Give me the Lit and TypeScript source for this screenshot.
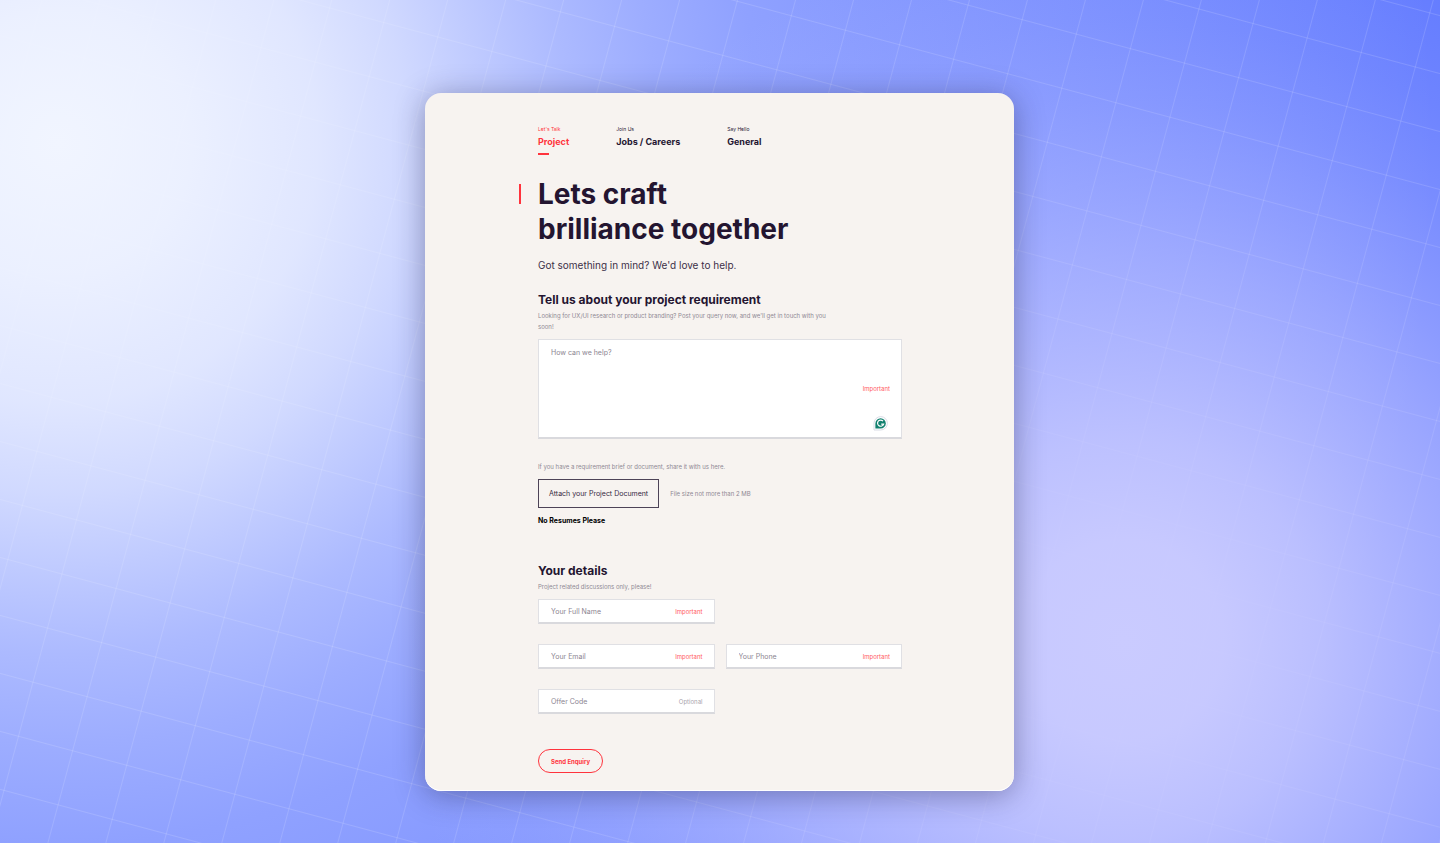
import { LitElement, html, css, svg } from "lit";
import { customElement, property, state } from "lit/decorators.js";
import { classMap } from "lit/directives/class-map.js";

interface Tab {
  id: string;
  hint: string;
  name: string;
}

const TABS: Tab[] = [
  { id: "project", hint: "Let's Talk", name: "Project" },
  { id: "careers", hint: "Join Us", name: "Jobs / Careers" },
  { id: "general", hint: "Say Hello", name: "General" },
];

const assistantIcon = svg`
  <path d="M1 14V7.2A6.7 6.7 0 1 1 7.7 14Z" fill="#fff" stroke="#d9dce6" stroke-width="1"/>
  <path d="M2.4 12.6V7.4A5.2 5.2 0 1 1 7.6 12.6Z" fill="#11806f"/>
  <path d="M10 5.1A3.1 3.1 0 1 0 10.6 8.2H8.2" fill="none" stroke="#fff" stroke-width="1.2"/>
`;

/** One-line text box with a note at its right end. */
@customElement("text-field")
export class TextField extends LitElement {
  @property() label = "";
  @property() note = "Important";
  @property() type = "text";

  static styles = css`
    :host {
      display: block;
      min-width: 0;
    }
    .box {
      box-sizing: border-box;
      display: flex;
      align-items: center;
      height: 25px;
      padding: 0 11px 0 12px;
      background: #fff;
      border: 1px solid #e0e0e4;
      border-bottom: 2px solid #d9d9dd;
    }
    .input {
      flex: 1;
      min-width: 0;
      padding: 0;
      border: 0;
      outline: 0;
      background: none;
      color: #241530;
      font: 7px/11px Inter, sans-serif;
    }
    .input::placeholder {
      color: #8b8591;
      opacity: 1;
    }
    .note {
      color: #ff5a5f;
      font-size: 6px;
      line-height: 11px;
    }
    .optional {
      color: #a9a5ad;
    }
  `;

  render() {
    return html`
      <label class="box">
        <input class="input" type=${this.type} placeholder=${this.label} aria-label=${this.label} />
        <span class=${classMap({ note: true, optional: this.note === "Optional" })}>${this.note}</span>
      </label>
    `;
  }
}

@customElement("app-root")
export class AppRoot extends LitElement {
  @state() private current = "project";

  static styles = css`
    :host {
      position: relative;
      box-sizing: border-box;
      display: flex;
      justify-content: center;
      align-items: flex-start;
      min-height: 100vh;
      padding: 93px 25px 52px 24px;
      overflow: hidden;
      background: #657dff;
      color: #241530;
      font-family: Inter, sans-serif;
      font-size: 7px;
      line-height: 11px;
    }
    .grid,
    .glow {
      position: absolute;
      inset: 0;
      width: 100%;
      height: 100%;
    }
    .glow {
      background:
        radial-gradient(
          circle at 78% 76%,
          rgba(202, 203, 255, 1) 0,
          rgba(202, 203, 255, 0.97) 100px,
          rgba(202, 203, 255, 0.84) 200px,
          rgba(202, 203, 255, 0.63) 310px,
          rgba(202, 203, 255, 0.5) 380px,
          rgba(202, 203, 255, 0.38) 440px,
          rgba(202, 203, 255, 0.2) 540px,
          rgba(202, 203, 255, 0.09) 620px,
          rgba(202, 203, 255, 0) 720px
        ),
        radial-gradient(
          circle at 4% 17%,
          rgba(241, 245, 255, 1) 0,
          rgba(241, 245, 255, 0.96) 130px,
          rgba(241, 245, 255, 0.88) 260px,
          rgba(241, 245, 255, 0.77) 350px,
          rgba(241, 245, 255, 0.64) 430px,
          rgba(241, 245, 255, 0.51) 510px,
          rgba(241, 245, 255, 0.4) 600px,
          rgba(241, 245, 255, 0.3) 700px,
          rgba(241, 245, 255, 0.24) 820px,
          rgba(241, 245, 255, 0.15) 1020px,
          rgba(241, 245, 255, 0) 1380px
        );
    }
    .card {
      position: relative;
      box-sizing: border-box;
      width: 100%;
      max-width: 589px;
      padding: 32px 112px 18px 113px;
      border-radius: 16px;
      background: #f7f3f0;
      box-shadow: 0 4px 30px rgba(30, 30, 70, 0.4), inset 0 -1px 0 #fff;
    }
    .tabs {
      display: flex;
      gap: 47px;
    }
    .tab {
      display: flex;
      flex-direction: column;
      color: inherit;
      text-decoration: none;
    }
    .hint {
      font-size: 5px;
      line-height: 9px;
    }
    .name {
      font-size: 9px;
      font-weight: 700;
      line-height: 16px;
    }
    .tab::after {
      content: "";
      width: 11px;
      height: 2px;
      margin-top: 3px;
    }
    .active {
      color: #ff333d;
    }
    .active::after {
      background: #ff333d;
    }
    .title {
      position: relative;
      margin: 22px 0 0;
      font-size: 28px;
      font-weight: 700;
      line-height: 35px;
    }
    .title::before {
      content: "";
      position: absolute;
      left: -19px;
      top: 7px;
      width: 2px;
      height: 20px;
      background: #ff333d;
    }
    .lead {
      margin: 10px 0 18px;
      color: #3d3048;
      font-size: 10px;
      line-height: 16px;
    }
    .heading {
      margin: 0 0 1px;
      font-size: 12px;
      font-weight: 700;
      line-height: 18px;
    }
    .help {
      max-width: 294px;
      margin: 0 0 7px;
      color: #8f8994;
      font-size: 6px;
    }
    .message {
      position: relative;
      box-sizing: border-box;
      display: flex;
      align-items: center;
      height: 100px;
      margin-bottom: 22px;
      padding: 0 11px 0 12px;
      background: #fff;
      border: 1px solid #e0e0e4;
      border-bottom: 2px solid #d9d9dd;
    }
    .textarea {
      flex: 1;
      align-self: stretch;
      padding: 7px 0;
      border: 0;
      outline: 0;
      resize: none;
      background: none;
      color: #241530;
      font: 7px/11px Inter, sans-serif;
    }
    .textarea::placeholder {
      color: #8b8591;
      opacity: 1;
    }
    .note {
      color: #ff5a5f;
      font-size: 6px;
    }
    .assistant {
      position: absolute;
      right: 13px;
      bottom: 6px;
      width: 15px;
      height: 15px;
    }
    .attach {
      display: flex;
      align-items: center;
      gap: 11px;
    }
    .limit {
      color: #8f8994;
      font-size: 6px;
    }
    .attach-button {
      height: 29px;
      padding: 0 10px;
      border: 1px solid #4d4357;
      background: none;
      color: #35283f;
      font: 7px/11px Inter, sans-serif;
    }
    .warning {
      margin: 7px 0 36px;
      color: #000;
      font-weight: 700;
    }
    .fields {
      display: grid;
      grid-template-columns: 1fr 1fr;
      gap: 20px 11px;
    }
    .start {
      grid-column: 1;
    }
    .send {
      height: 24px;
      margin-top: 35px;
      padding: 0 12px;
      border: 1px solid #ff333d;
      border-radius: 12px;
      background: none;
      color: #ff333d;
      font: 700 6px/11px Inter, sans-serif;
    }
  `;

  private choose(event: Event, id: string) {
    event.preventDefault();
    this.current = id;
  }

  render() {
    return html`
      <svg class="grid" aria-hidden="true">
        <defs>
          <pattern
            id="mesh"
            width="56"
            height="56"
            patternUnits="userSpaceOnUse"
            patternTransform="translate(1130 48) rotate(15)"
          >
            <path d="M0 .5H56M.5 0V56" fill="none" stroke="#fff" stroke-opacity=".14" />
          </pattern>
        </defs>
        <rect width="100%" height="100%" fill="url(#mesh)" />
      </svg>
      <div class="glow"></div>

      <main class="card">
        <nav class="tabs">
          ${TABS.map(
            (tab) => html`
              <a
                href="#${tab.id}"
                class=${classMap({ tab: true, active: tab.id === this.current })}
                @click=${(event: Event) => this.choose(event, tab.id)}
              >
                <span class="hint">${tab.hint}</span>
                <span class="name">${tab.name}</span>
              </a>
            `,
          )}
        </nav>

        <h1 class="title">Lets craft<br />brilliance together</h1>
        <p class="lead">Got something in mind? We'd love to help.</p>

        <form @submit=${(event: Event) => event.preventDefault()}>
          <h2 class="heading">Tell us about your project requirement</h2>
          <p class="help">
            Looking for UX/UI research or product branding? Post your query now, and we'll get in touch with you soon!
          </p>
          <label class="message">
            <textarea class="textarea" placeholder="How can we help?" aria-label="How can we help?"></textarea>
            <span class="note">Important</span>
            <svg class="assistant" viewBox="0 0 15 15" aria-hidden="true">${assistantIcon}</svg>
          </label>

          <p class="help">If you have a requirement brief or document, share it with us here.</p>
          <div class="attach">
            <button class="attach-button" type="button">Attach your Project Document</button>
            <span class="limit">File size not more than 2 MB</span>
          </div>
          <p class="warning">No Resumes Please</p>

          <h2 class="heading">Your details</h2>
          <p class="help">Project related discussions only, please!</p>
          <div class="fields">
            <text-field class="start" label="Your Full Name"></text-field>
            <text-field class="start" type="email" label="Your Email"></text-field>
            <text-field type="tel" label="Your Phone"></text-field>
            <text-field class="start" label="Offer Code" note="Optional"></text-field>
          </div>
          <button class="send" type="submit">Send Enquiry</button>
        </form>
      </main>
    `;
  }
}
